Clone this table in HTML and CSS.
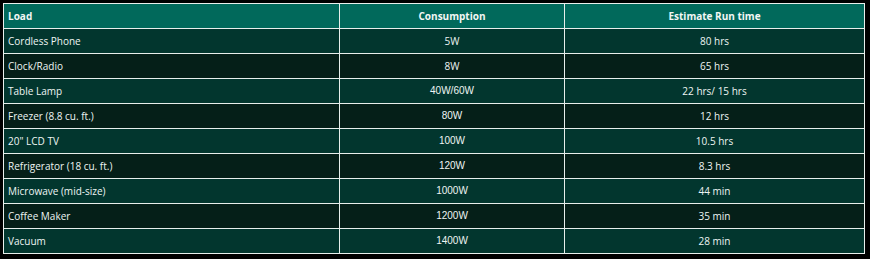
FILE: index.html
```html
<!DOCTYPE html>
<html>
<head>
<meta charset="utf-8">
<link rel="stylesheet" href="styles.css">
</head>
<body>
<table class="runtime">
  <thead>
    <tr><th class="left">Load</th><th>Consumption</th><th>Estimate Run time</th></tr>
  </thead>
  <tbody>
    <tr><td class="left">Cordless Phone</td><td>5W</td><td>80 hrs</td></tr>
    <tr><td class="left">Clock/Radio</td><td>8W</td><td>65 hrs</td></tr>
    <tr><td class="left">Table Lamp</td><td class="alt">40W/60W</td><td>22 hrs/ 15 hrs</td></tr>
    <tr><td class="left">Freezer (8.8 cu. ft.)</td><td class="alt">80W</td><td>12 hrs</td></tr>
    <tr><td class="left">20" LCD TV</td><td class="alt">100W</td><td>10.5 hrs</td></tr>
    <tr><td class="left">Refrigerator (18 cu. ft.)</td><td class="alt">120W</td><td>8.3 hrs</td></tr>
    <tr><td class="left">Microwave (mid-size)</td><td class="alt">1000W</td><td>44 min</td></tr>
    <tr><td class="left">Coffee Maker</td><td class="alt">1200W</td><td>35 min</td></tr>
    <tr><td class="left">Vacuum</td><td class="alt">1400W</td><td>28 min</td></tr>
  </tbody>
</table>
</body>
</html>
```
FILE: styles.css
```css
html, body {
  background: #000;
}
body {
  margin: 3px;
  font-family: "Open Sans", "Noto Sans", sans-serif;
  font-size: 10px;
  color: #eef5f3;
}
.runtime {
  border-collapse: collapse;
  width: 862px;
  border: 1px solid #e8efec;
}
.runtime th, .runtime td {
  border: 1px solid #e8efec;
  padding: 5px 4px;
  text-align: center;
  line-height: 14px;
}
.runtime th {
  background: #01695b;
  font-weight: 700;
  color: #f2f7f5;
}
.runtime th:first-child, .runtime td:first-child {
  width: 327px;
}
.runtime th:nth-child(2), .runtime td:nth-child(2) {
  width: 216px;
}
.runtime .left {
  text-align: left;
}
.runtime tbody tr:nth-child(odd) td {
  background: #02362e;
}
.runtime tbody tr:nth-child(even) td {
  background: #051f18;
}
.runtime td.alt {
  font-family: "Liberation Sans", Arial, sans-serif;
}
```
